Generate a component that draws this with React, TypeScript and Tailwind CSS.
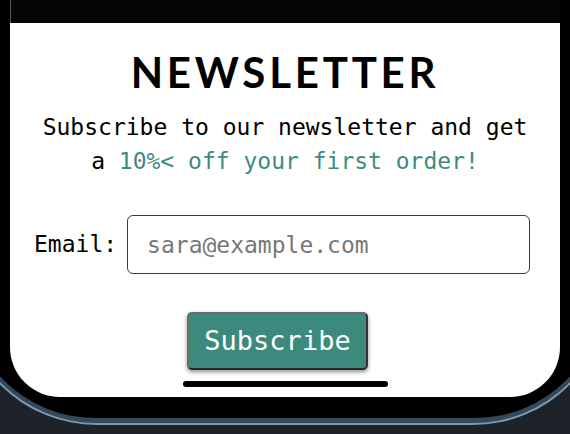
export default function App() {
  return (
    <div className="h-[434px] w-[570px] overflow-hidden bg-[#1e2329]">
      {/* phone rim */}
      <div className="-mx-[40px] rounded-b-[137px] border-x-2 border-b-2 border-[#7d97ae] bg-gradient-to-b from-[#1a232c] to-[#34495c] px-[4px] pb-[5px]">
        {/* phone body */}
        <div className="rounded-b-[129px] bg-black px-[44px] pb-[21px]">
          {/* screen */}
          <div className="flex h-[397px] flex-col overflow-hidden rounded-b-[50px] bg-white">
            <div className="h-[23px] shrink-0 border-l border-[#5a5a5a] bg-[#050505]" />

            <div className="mx-auto w-[500px] text-center">
              <h1 className="mt-[23px] font-['Lato','Liberation_Sans',sans-serif] text-[42px] font-bold leading-[52px] tracking-[0.09em] text-black">
                NEWSLETTER
              </h1>
              <p className="mt-[12px] font-['DejaVu_Sans_Mono',monospace] text-[23px] leading-[34px] text-black">
                Subscribe to our newsletter and get
                <br />
                a <span className="text-[#3d8b7f]">10%&lt; off your first order!</span>
              </p>
            </div>

            <form className="mt-[37px] flex items-center pl-[24px]">
              <label
                htmlFor="email"
                className="font-['DejaVu_Sans_Mono',monospace] text-[23px] text-black"
              >
                Email:
              </label>
              <input
                id="email"
                type="email"
                placeholder="sara@example.com"
                className="ml-[10px] h-[59px] w-[403px] rounded-[6px] border border-[#3a3a3a] px-[19px] font-['DejaVu_Sans_Mono',monospace] text-[23px] text-black outline-none placeholder:text-[#777]"
              />
            </form>

            <button
              type="button"
              className="ml-[177px] mt-[38px] h-[58px] w-[181px] rounded-[5px] border-2 border-t-[#6b6b6b] border-l-[#6b6b6b] border-r-[#333] border-b-[#2a2a2a] bg-[#3c8a7d] font-['DejaVu_Sans_Mono',monospace] text-[27px] text-white shadow-[0_2px_4px_rgba(0,0,0,0.45)]"
            >
              Subscribe
            </button>

            <div className="mx-auto mt-[11px] h-[6px] w-[205px] rounded-full bg-black" />
          </div>
        </div>
      </div>
    </div>
  );
}
